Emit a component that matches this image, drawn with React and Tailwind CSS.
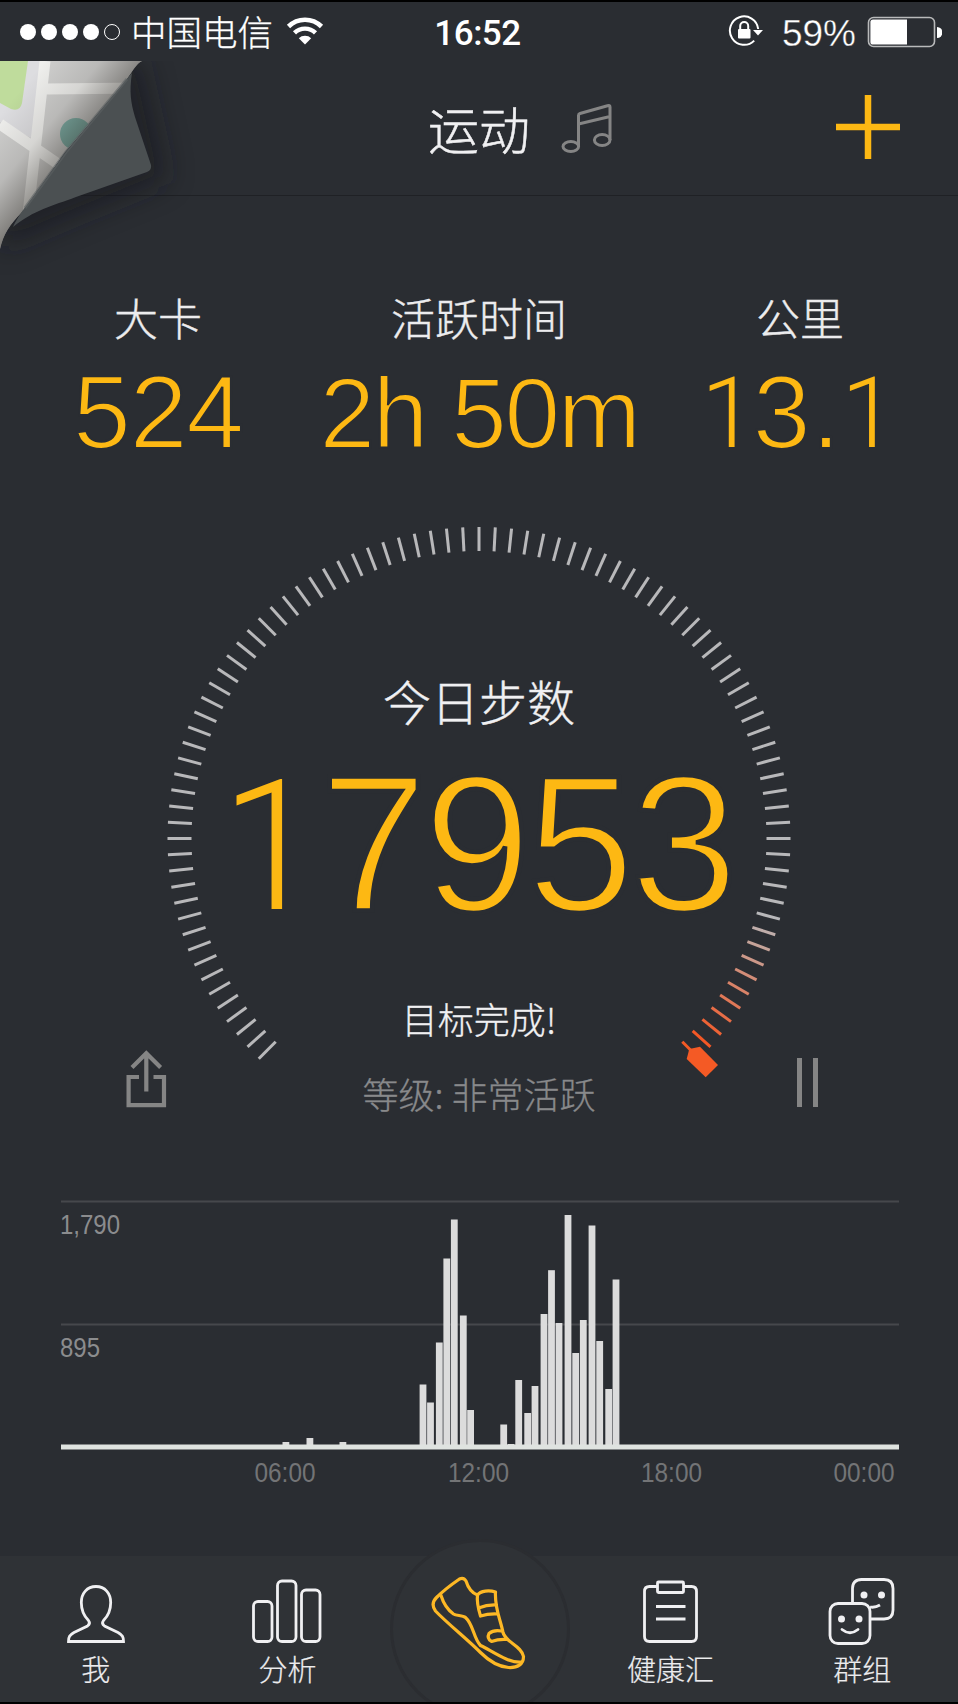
import React from "react";

const STATS = [
  { label: "大卡", value: "524", width: "w-[240px]", size: "text-[104px] leading-[100px] tracking-[-1.2px]" },
  { label: "活跃时间", value: "2h 50m", width: "flex-1", size: "text-[100px] leading-[102px] tracking-[-2.4px]" },
  { label: "公里", value: "13.1", width: "w-[240px]", size: "text-[104px] leading-[100px] tracking-[1px] pr-[6px]" },
];

// [x, top] on the 838 x 300 chart canvas
const BARS = [
  [221.5, 247], [245.5, 243], [278.5, 247],
  [358.6, 189.5], [366.1, 207.5], [374.9, 147.5], [382.4, 63.5], [389.9, 24.5], [398.9, 120.5], [406.2, 215],
  [439.3, 229.5], [446.6, 249], [454.3, 185], [463.3, 218], [470.6, 191], [479.6, 119], [487.1, 75.2],
  [494.6, 128], [503.6, 20], [511.3, 158], [518.9, 125], [527.6, 30.5], [535.3, 146], [544.3, 194], [551.6, 84.5],
];

const TICKS = Array.from({ length: 91 }, (_, i) => i);

// the last ticks fade from grey into orange
function tickColor(i) {
  const t = Math.max(0, (i - 80) / 9);
  const mix = (a, b) => Math.round(a + (b - a) * Math.min(1, t));
  return `rgb(${mix(184, 244)}, ${mix(184, 88)}, ${mix(186, 38)})`;
}

function Digits({ value, oneClass }) {
  return value.split(/(1)/).filter(Boolean).map((part, i) =>
    part === "1" ? (
      <span key={i} className={`font-[Roboto] font-light leading-none [-webkit-text-stroke:0] ${oneClass}`}>1</span>
    ) : (
      <React.Fragment key={i}>{part}</React.Fragment>
    )
  );
}

function StatusBar() {
  return (
    <div className="grid h-[61px] grid-cols-[1fr_auto_1fr] items-center border-t-2 border-black font-[Roboto] text-white">
      <div className="flex items-center pl-5">
        <div className="flex gap-[5px]">
          {[0, 1, 2, 3].map((n) => (
            <span key={n} className="h-4 w-4 rounded-full bg-white" />
          ))}
          <span className="h-4 w-4 rounded-full border border-white" />
        </div>
        <span className="-mt-0.5 ml-[11px] font-['Noto_Sans_CJK_SC',sans-serif] text-[35.5px] font-light leading-[50px] [-webkit-text-stroke:0.3px]">中国电信</span>
        <svg className="ml-[13px] -mt-0.5" width="38" height="28" viewBox="0 0 38 28">
          <path d="M2.5 9.5a23.5 23.5 0 0 1 33 0" fill="none" stroke="white" strokeWidth="4.6" />
          <path d="M8.5 15.9a15 15 0 0 1 21 0" fill="none" stroke="white" strokeWidth="4.4" />
          <path d="M12.8 21.2a9 9 0 0 1 12.4 0L19 27.4z" fill="white" />
        </svg>
      </div>
      <div className="mt-[5px] pr-[3px] text-[35px] font-medium leading-[50px] tracking-[-0.5px]">16:52</div>
      <div className="flex items-center justify-end pr-4">
        <svg width="36" height="34" viewBox="0 0 36 34" className="-mt-0.5">
          <path d="M26.2 26.6A14.2 14.2 0 1 1 30.2 15" fill="none" stroke="white" strokeWidth="2" />
          <path d="M25 16h10l-5 5.5z" fill="white" />
          <rect x="10" y="15" width="12.5" height="9.5" rx="1" fill="white" />
          <path d="M12.2 16v-4a4 4 0 0 1 8 0v4" fill="none" stroke="white" strokeWidth="2" />
        </svg>
        <span className="ml-[18px] mt-[5px] font-['Liberation_Sans',sans-serif] text-[37px] leading-[50px] [-webkit-text-stroke:0.4px_#2a2d32]">59%</span>
        <svg className="ml-[11px]" width="75" height="32" viewBox="0 0 75 32">
          <rect x="1.5" y="1.5" width="66" height="29" rx="5" fill="none" stroke="#b9babb" strokeWidth="1.6" />
          <path d="M6 3.5h34v25H6a2.6 2.6 0 0 1-2.6-2.6V6.1A2.6 2.6 0 0 1 6 3.5z" fill="white" />
          <path d="M70 11a5.5 5.5 0 0 1 0 11z" fill="white" />
        </svg>
      </div>
    </div>
  );
}

function PageCurl() {
  return (
    <svg className="absolute left-0 top-[61px]" width="240" height="220" viewBox="0 61 240 220">
      <defs>
        <linearGradient id="paper" gradientUnits="userSpaceOnUse" x1="20" y1="90" x2="88" y2="146">
          <stop offset="0" stopColor="#1c1812" stopOpacity="0" />
          <stop offset=".5" stopColor="#1c1812" stopOpacity=".12" />
          <stop offset="1" stopColor="#1c1812" stopOpacity=".5" />
        </linearGradient>
        <filter id="soft" x="-40%" y="-40%" width="180%" height="180%">
          <feGaussianBlur stdDeviation="14" />
        </filter>
        <clipPath id="sheet">
          <path d="M0 61H142C136 64 132 72 127 79L65 152L22 212C10 224 3 235 0 249z" />
        </clipPath>
      </defs>
      <path d="M0 61H142L168 180L70 220L0 250z" fill="#14161a" opacity=".5" filter="url(#soft)" />
      <g clipPath="url(#sheet)">
        <rect y="61" width="150" height="190" fill="#cfcfce" />
        <path d="M0 61H42L35 140L0 122z" fill="#dddde0" />
        <path d="M0 61H28L22 103Q20 112 11 109L0 103z" fill="#bfdc9c" />
        <path d="M45 61L24 250M46 89L150 88M0 124L64 168" stroke="#efefed" strokeWidth="11" fill="none" />
        <circle cx="76" cy="134" r="16" fill="#7fb0a8" />
        <rect y="61" width="150" height="190" fill="url(#paper)" />
      </g>
      <path d="M132 73C129 92 131 103 135 117L151 165Q152 170 147 172L76 197C52 206 34 210 13 227C18 216 24 209 29 202L66 152L121 86C126 80 129 76 132 73z" fill="#4b5052" />
      <path d="M127 79L66 152L25 208" stroke="#5b6062" strokeWidth="3" fill="none" opacity=".6" />
    </svg>
  );
}

function Header() {
  return (
    <header className="flex h-[135px] items-start border-b border-[#1f2125] pr-[58px]">
      <h1 className="ml-[428px] mt-[42px] text-[51px] font-light leading-[51px] text-[#f0f0f2] [-webkit-text-stroke:0.5px]">运动</h1>
      <svg className="ml-[31px] mt-[42px]" width="52" height="52" viewBox="0 0 52 52" fill="none" stroke="#858585" strokeWidth="3">
        <path d="M17.5 43V12.5Q17.5 11 19 10.5L46.5 2.7Q49 2 49 4V37M17.5 21L49 13.5" />
        <ellipse cx="9.8" cy="43.5" rx="7.8" ry="5" />
        <ellipse cx="41.2" cy="37" rx="7.8" ry="5.5" />
      </svg>
      <svg className="ml-auto mt-[34px]" width="64" height="64" viewBox="0 0 64 64">
        <path d="M32 0V64M0 32H64" stroke="#fdb813" strokeWidth="6.5" />
      </svg>
    </header>
  );
}

function Stats() {
  return (
    <section className="flex h-[269px] px-[38px] pt-[99px]">
      {STATS.map((s) => (
        <div key={s.label} className={`${s.width} flex flex-col items-center`}>
          <div className="text-[44px] font-light leading-[44px] text-[#ececee] [-webkit-text-stroke:0.4px]">{s.label}</div>
          <div className={`${s.size} mt-[23px] whitespace-nowrap font-['Liberation_Sans',sans-serif] text-[#fdb813] [-webkit-text-stroke:2.2px_#2a2d32]`}>
            <Digits value={s.value} oneClass="align-[1px] text-[99px] tracking-[-3.3px]" />
          </div>
        </div>
      ))}
    </section>
  );
}

function Gauge() {
  return (
    <section className="mt-[55px] grid h-[600px] grid-cols-1 grid-rows-1">
      <svg className="col-start-1 row-start-1 mx-auto" width="640" height="600" viewBox="159 520 640 600">
        {TICKS.map((i) => (
          <path
            key={i}
            d="M479 527V551"
            stroke={i === 90 ? "#f45a25" : tickColor(i)}
            strokeWidth="3"
            transform={`rotate(${i * 3 - 135} 479 838.5)`}
          />
        ))}
        <path d="M689.3 1049L700 1046.7L718 1065L705.7 1077.3L686.7 1059z" fill="#f45a25" />
      </svg>
      <div className="col-start-1 row-start-1 flex flex-col items-center pt-[156px]">
        <div className="text-[48px] font-light leading-[48px] text-[#f0f0f2] [-webkit-text-stroke:0.4px]">今日步数</div>
        <div className="mt-[30px] h-[180px] pr-[3.5px] font-['Liberation_Sans',sans-serif] text-[194px] leading-[180px] tracking-[-4.4px] text-[#fdb813] [-webkit-text-stroke:4.6px_#2a2d32]">
          <Digits value="17953" oneClass="align-[2.5px] text-[181px] tracking-[-1.5px]" />
        </div>
        <div className="mt-[66px] text-[36px] font-light leading-[36px] text-[#f0f0f2] [-webkit-text-stroke:0.3px]">目标完成!</div>
        <div className="mt-[39px] text-[36px] font-light leading-[36px] text-[#88898b] [-webkit-text-stroke:0.3px]">等级: 非常活跃</div>
      </div>
      <div className="col-start-1 row-start-1 flex items-end justify-between self-end pb-3 pl-[126px] pr-[140px]">
        <svg width="41" height="58" viewBox="0 0 41 58" fill="none" stroke="#858585" strokeWidth="4.2">
          <path d="M13 27H2.6V55.2H38V27H27.5M20.3 41.5V4M6 17.5L20.3 3.2L34.6 17.5" />
        </svg>
        <div className="mb-px flex gap-[11px]">
          <span className="h-[49px] w-[5px] bg-[#858585]" />
          <span className="h-[49px] w-[5px] bg-[#858585]" />
        </div>
      </div>
    </section>
  );
}

function Chart() {
  const times = [["06:00", 193.5], ["12:00", 387], ["18:00", 580], ["00:00", 772.5]];
  return (
    <svg className="ml-[61px] mt-[75px] shrink-0 overflow-visible font-['Liberation_Sans',sans-serif]" width="838" height="300" viewBox="0 0 838 300">
      <path d="M0 6.5H838M0 129.5H838" stroke="#46484c" strokeWidth="2" />
      {BARS.map(([x, y]) => (
        <rect key={x} x={x} y={y} width="6.8" height={252 - y} fill="#dcdcdc" />
      ))}
      <rect y="249.5" width="838" height="5" fill="#dfe3e0" />
      <g fill="#8b8c8e" fontSize="28">
        <text x="-1" y="39" textLength="60" lengthAdjust="spacingAndGlyphs">1,790</text>
        <text x="-1" y="161.5" textLength="40" lengthAdjust="spacingAndGlyphs">895</text>
      </g>
      <g fill="#737476" fontSize="28">
        {times.map(([t, x]) => (
          <text key={t} x={x} y="287" textLength="61" lengthAdjust="spacingAndGlyphs">{t}</text>
        ))}
      </g>
    </svg>
  );
}

function Tab({ label, children }) {
  return (
    <div className="flex flex-1 flex-col items-center pt-[21px]">
      <svg width="72" height="68" viewBox="0 0 72 68" fill="none" stroke="#f0f0f2" strokeWidth="2.8">{children}</svg>
      <span className="mt-[8px] text-[29px] font-light leading-[30px] text-[#ececee] [-webkit-text-stroke:0.2px]">{label}</span>
    </div>
  );
}

function TabBar() {
  return (
    <nav className="relative mt-auto flex h-[148px] border-b-2 border-black bg-[#2f3236]">
      <Tab label="我">
        <path d="M36 9.5C27 9.5 21.3 16.5 21.3 25.5C21.3 34 24 39 28.5 43.5C30 45.5 29.5 47.5 27.5 49L14 55.5C9.5 58 8.5 60 8.5 64.5H63.5C63.5 60 62.5 58 58 55.5L44.5 49C42.5 47.5 42 45.5 43.5 43.5C48 39 50.7 34 50.7 25.5C50.7 16.5 45 9.5 36 9.5z" />
      </Tab>
      <Tab label="分析">
        <rect x="2.5" y="24.5" width="18.5" height="40" rx="4.5" />
        <rect x="26.5" y="4" width="18.5" height="60.5" rx="4.5" />
        <rect x="50.5" y="13" width="18.5" height="51.5" rx="4.5" />
      </Tab>
      <div className="flex-1">
        <div className="absolute -top-[17px] left-[390px] flex h-[163px] w-[180px] justify-center overflow-hidden">
          <div className="absolute inset-x-0 top-0 h-[180px] rounded-full border-[3px] border-[#2b2d31] bg-[#2f3236]" />
          <svg className="relative" width="180" height="163" viewBox="390.5 1538.5 180 163" fill="none" stroke="#fdb825" strokeWidth="3.2" strokeLinecap="round" strokeLinejoin="round">
            <path d="M460 1578.5Q464 1576.5 466.5 1580.5C468.5 1587 471 1592 478 1594.5C481 1590 490 1589.5 496 1591.5C495 1608 501 1619 503.5 1632C506 1642 522 1645 524 1656C524 1664 518 1667.5 509 1667C497 1666 489 1660 481 1652C468 1639 448 1623 436 1610.5C432 1605 433 1601 437 1597C443 1591 452 1584 460 1578.5z" />
            <path d="M441.5 1595C444 1603 449 1610 454 1613.5C457 1615.5 463 1614.5 466 1617C474 1624 474 1638 481 1645C492 1650 509 1663 522 1661.5" />
            <path d="M478 1594.5C477 1602 479 1609 481 1615.5Q489 1613 498 1613.5M479 1607.5Q488 1604 497 1604.5" />
            <path d="M502 1630.5Q494 1629 489.5 1633Q487 1638 492 1641Q499 1638.5 507 1639" />
          </svg>
        </div>
      </div>
      <Tab label="健康汇">
        <path d="M22 9.5H14.5Q9.5 9.5 9.5 14.5V59.5Q9.5 64.5 14.5 64.5H56.5Q61.5 64.5 61.5 59.5V14.5Q61.5 9.5 56.5 9.5H49M21 29.5H50.5M21 42H50.5" />
        <rect x="22.5" y="5" width="26" height="10.5" rx="1" />
      </Tab>
      <Tab label="群组">
        <path d="M26.5 26V11.5Q26.5 2.5 35.5 2.5H58Q67 2.5 67 11.5V33Q67 42 58 42H45M44 30Q49 31 54 28" />
        <rect x="4" y="26.5" width="40" height="40" rx="8" />
        <path d="M16 52.5Q24 59 32 52.5" strokeLinecap="round" />
        <g fill="#f0f0f2" stroke="none">
          <circle cx="15.5" cy="42" r="3.5" />
          <circle cx="33" cy="42" r="3.5" />
          <circle cx="38" cy="18" r="3.5" />
          <circle cx="55.5" cy="18" r="3.5" />
        </g>
      </Tab>
    </nav>
  );
}

export default function App() {
  return (
    <div className="relative flex h-[1704px] w-[958px] flex-col overflow-hidden bg-[#2a2d32] font-['Noto_Sans_CJK_SC',sans-serif]">
      <StatusBar />
      <Header />
      <PageCurl />
      <Stats />
      <Gauge />
      <Chart />
      <TabBar />
    </div>
  );
}
